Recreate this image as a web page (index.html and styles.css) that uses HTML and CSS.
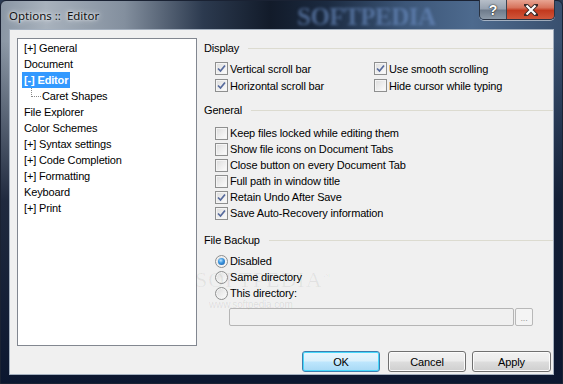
FILE: index.html
```html
<!DOCTYPE html>
<html lang="en">
<head>
  <meta charset="UTF-8">
  <title>Options :: Editor</title>
  <link rel="stylesheet" href="styles.css">
</head>
<body>

  <div class="window">
    <div class="titlebar">
      <span class="title">Options ::&nbsp; Editor</span>
      <span class="wm-title">SOFTPEDIA</span>
      <div class="caption-btns">
        <span class="cap help">?</span>
        <span class="cap close">
          <svg width="14" height="12" viewBox="0 0 14 12">
            <path d="M2 1 L12 11 M12 1 L2 11" stroke="#3a2a28" stroke-width="4" stroke-linecap="square"/>
            <path d="M2.5 1.5 L11.5 10.5 M11.5 1.5 L2.5 10.5" stroke="#fff" stroke-width="2.2"/>
          </svg>
        </span>
      </div>
    </div>

    <div class="client">
      <div class="main">
        <ul class="tree">
          <li><span>[+] General</span></li>
          <li><span>Document</span></li>
          <li class="selected"><span>[-] Editor</span></li>
          <li class="child"><span>Caret Shapes</span></li>
          <li><span>File Explorer</span></li>
          <li><span>Color Schemes</span></li>
          <li><span>[+] Syntax settings</span></li>
          <li><span>[+] Code Completion</span></li>
          <li><span>[+] Formatting</span></li>
          <li><span>Keyboard</span></li>
          <li><span>[+] Print</span></li>
        </ul>

        <div class="settings">
          <div class="group-head">Display<span class="rule"></span></div>
          <div class="display-grid">
            <label class="opt"><span class="cb checked"></span>Vertical scroll bar</label>
            <label class="opt"><span class="cb checked"></span>Use smooth scrolling</label>
            <label class="opt"><span class="cb checked"></span>Horizontal scroll bar</label>
            <label class="opt"><span class="cb"></span>Hide cursor while typing</label>
          </div>

          <div class="group-head general-head">General<span class="rule"></span></div>
          <div class="general-list">
            <label class="opt"><span class="cb"></span>Keep files locked while editing them</label>
            <label class="opt"><span class="cb"></span>Show file icons on Document Tabs</label>
            <label class="opt"><span class="cb"></span>Close button on every Document Tab</label>
            <label class="opt"><span class="cb"></span>Full path in window title</label>
            <label class="opt"><span class="cb checked"></span>Retain Undo After Save</label>
            <label class="opt"><span class="cb checked"></span>Save Auto-Recovery information</label>
          </div>

          <div class="group-head backup-head">File Backup<span class="rule"></span></div>
          <div class="backup-list">
            <label class="opt"><span class="rb checked"></span>Disabled</label>
            <label class="opt"><span class="rb"></span>Same directory</label>
            <label class="opt"><span class="rb"></span>This directory:</label>
            <span class="wm-big">SOFTPEDIA<sup>™</sup></span>
            <span class="wm-small">www.softpedia.com</span>
          </div>
          <div class="dir-row">
            <div class="dir-input"></div>
            <div class="dir-btn">...</div>
          </div>
        </div>
      </div>

      <div class="buttons">
        <button class="btn default">OK</button>
        <button class="btn">Cancel</button>
        <button class="btn apply">Apply</button>
      </div>
    </div>
  </div>

</body>
</html>
```

FILE: styles.css
```css
* {
  box-sizing: border-box;
}

body {
  margin: 0;
  background: #2b3a52;
  font-family: "Liberation Sans", Arial, sans-serif;
  font-size: 11px;
  letter-spacing: -0.15px;
  color: #000;
}

.window {
  width: 563px;
  height: 384px;
  padding: 0 8px 8px 8px;
  display: flex;
  flex-direction: column;
  border-radius: 6px 6px 0 0;
  border: 1px solid #1a2233;
  background:
    linear-gradient(180deg, rgba(12, 22, 44, 0) 0, rgba(12, 22, 44, 0) 40px, rgba(12, 22, 44, 0.85) 200px, #0c1730 100%),
    linear-gradient(90deg, #8a96a4 0%, #a8b2bd 8%, #838f9e 22%, #2c3a4f 36%, #121b2a 48%, #1b2a40 58%, #3c5678 72%, #4d6a8e 84%, #39506f 100%);
}

/* Title bar */
.titlebar {
  height: 28px;
  display: flex;
  align-items: flex-start;
  position: relative;
}

.title {
  padding-top: 7px;
  font-family: "Noto Sans", sans-serif;
  font-size: 11.5px;
  letter-spacing: 0;
  color: #111;
  text-shadow: 0 0 6px rgba(255, 255, 255, 0.9), 0 0 3px rgba(255, 255, 255, 0.9);
  white-space: pre;
}

.wm-title {
  position: absolute;
  left: 288px;
  top: 2px;
  font-family: "Liberation Serif", serif;
  font-weight: bold;
  font-size: 25px;
  letter-spacing: -0.5px;
  color: rgba(110, 145, 200, 0.6);
  filter: blur(1.4px);
}

.caption-btns {
  margin-left: auto;
  margin-right: -1px;
  display: flex;
  height: 20px;
  margin-top: -1px;
  border: 1px solid #2a3342;
  border-top: none;
  border-radius: 0 0 5px 5px;
  overflow: hidden;
  box-shadow: 0 1px 0 rgba(255, 255, 255, 0.5);
}

.cap {
  display: flex;
  align-items: center;
  justify-content: center;
  height: 100%;
}

.help {
  width: 27px;
  border-right: 1px solid #3b4350;
  background: linear-gradient(180deg, #b6bec8 0%, #98a3b1 45%, #6f7c8c 55%, #8d9aa8 100%);
  color: #fff;
  font-family: "Liberation Sans", sans-serif;
  font-weight: bold;
  font-size: 14px;
  text-shadow: 0 0 2px #333, 0 0 1px #000;
}

.close {
  width: 47px;
  background: linear-gradient(180deg, #e8a593 0%, #d7735c 40%, #c2391e 55%, #d0563a 100%);
}

/* Client area */
.client {
  flex: 1;
  display: flex;
  flex-direction: column;
  background: #f0f0f0;
  border: 1px solid #a4b0bf;
}

.main {
  display: flex;
  padding: 8px 0 0 7px;
}

.tree {
  list-style: none;
  margin: 0;
  padding: 1px 0 0 4px;
  width: 180px;
  height: 308px;
  background: #fff;
  border: 1px solid #828790;
}

.tree li {
  height: 16px;
  line-height: 16px;
}

.tree li span {
  display: inline-block;
  padding: 0 2px;
  white-space: nowrap;
}

.tree li.selected span {
  background: #3399ff;
  color: #fff;
  font-weight: bold;
  height: 16px;
}

.tree li.child {
  position: relative;
  padding-left: 18px;
}

.tree li.child::before {
  content: "";
  position: absolute;
  left: 9px;
  top: 0;
  width: 9px;
  height: 8px;
  border-left: 1px dotted #8a8a8a;
  border-bottom: 1px dotted #8a8a8a;
}

/* Settings */
.settings {
  width: 349px;
  margin-left: 7px;
  padding-top: 2px;
}

.group-head {
  display: flex;
  align-items: center;
  height: 16px;
}

.rule {
  flex: 1;
  margin-left: 9px;
  border-top: 1px solid #dcdbd0;
}

.general-head {
  margin-top: 8px;
}

.backup-head {
  margin-top: 11px;
}

.display-grid {
  display: grid;
  grid-template-columns: 159px 1fr;
  grid-auto-rows: 17px;
  margin: 4px 0 0 11px;
}

.general-list {
  margin: 7px 0 0 11px;
}

.backup-list {
  margin: 5px 0 0 11px;
  position: relative;
}

.opt {
  display: flex;
  align-items: center;
  height: 16px;
  white-space: nowrap;
}

.display-grid .opt {
  height: 17px;
}

.cb,
.rb {
  flex: none;
  width: 13px;
  height: 13px;
  margin-right: 2px;
  border: 1px solid #8e8f8f;
  background: linear-gradient(135deg, #dcdcdc 0%, #f0f0f0 60%, #fdfdfd 100%);
  box-shadow: inset 0 0 0 1px #f4f4f4;
  position: relative;
}

.cb.checked::after {
  content: "";
  position: absolute;
  left: 1px;
  top: 1px;
  width: 9px;
  height: 9px;
  background: url("data:image/svg+xml;utf8,<svg xmlns='http://www.w3.org/2000/svg' width='9' height='9'><path d='M1 4.5 L3.5 7 L8 1.5' fill='none' stroke='%23566a9c' stroke-width='1.7'/></svg>") no-repeat;
}

.rb {
  border-radius: 50%;
}

.rb.checked::after {
  content: "";
  position: absolute;
  left: 2px;
  top: 2px;
  width: 7px;
  height: 7px;
  border-radius: 50%;
  background: radial-gradient(circle at 40% 35%, #bfe4ff 0%, #3d98e0 40%, #1a55a0 100%);
}

.wm-big {
  position: absolute;
  left: -20px;
  top: 14px;
  font-family: "Liberation Serif", serif;
  font-size: 22px;
  letter-spacing: 1px;
  color: rgba(0, 0, 0, 0.06);
  pointer-events: none;
}

.wm-big sup {
  font-size: 8px;
}

.wm-small {
  position: absolute;
  left: -6px;
  top: 46px;
  font-size: 10px;
  color: rgba(0, 0, 0, 0.09);
  pointer-events: none;
}

.dir-row {
  display: flex;
  gap: 1px;
  margin: 7px 0 0 25px;
  height: 18px;
}

.dir-input {
  width: 285px;
  border: 1px solid #b5b5b5;
  border-radius: 2px;
  background: #f0f0f0;
}

.dir-btn {
  width: 18px;
  border: 1px solid #b8b8b8;
  border-radius: 2px;
  background: #f4f4f4;
  color: #9a9a9a;
  font-size: 9px;
  line-height: 18px;
  text-align: center;
}

/* Dialog buttons */
.buttons {
  display: flex;
  justify-content: flex-end;
  gap: 8px;
  margin-top: 5px;
  padding-right: 2px;
}

.btn {
  width: 78px;
  height: 21px;
  padding: 0;
  font-family: "Liberation Sans", Arial, sans-serif;
  font-size: 11px;
  letter-spacing: -0.15px;
  color: #000;
  border: 1px solid #707070;
  border-radius: 3px;
  background: linear-gradient(180deg, #f2f2f2 0%, #ebebeb 48%, #dddddd 52%, #cfcfcf 100%);
  box-shadow: inset 0 0 0 1px #fbfbfb;
}

.btn.default {
  border-color: #3c7fb1;
  background: linear-gradient(180deg, #eaf6fd 0%, #d9f0fc 48%, #bee6fd 52%, #a7d9f5 100%);
  box-shadow: inset 0 0 0 1px #48d8fb;
}

.btn.apply {
  width: 79px;
  margin-left: -2px;
}
```
